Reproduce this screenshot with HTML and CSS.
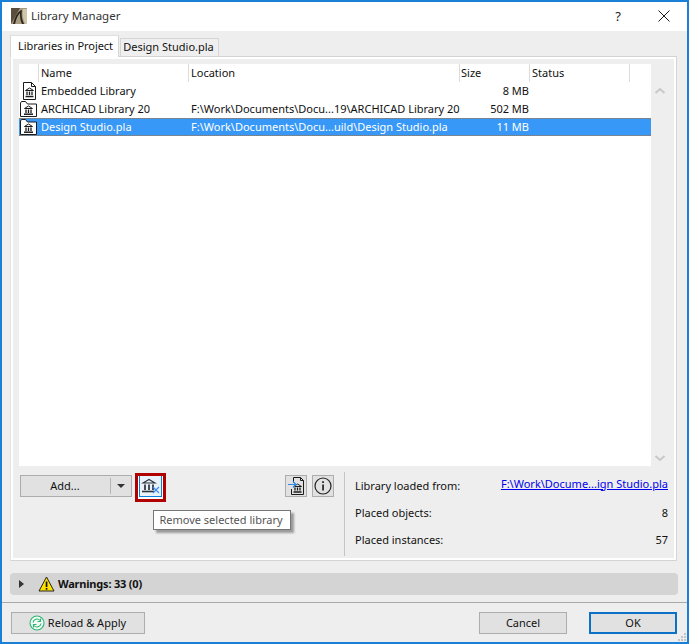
FILE: index.html
```html
<!DOCTYPE html>
<html lang="en">
<head>
<meta charset="utf-8">
<title>Library Manager</title>
<link rel="stylesheet" href="styles.css">
</head>
<body>
<svg class="defs" width="0" height="0">
  <symbol id="temple" viewBox="0 0 16 16">
    <path d="M8 1.500 2 5h12z" fill="none" stroke="currentColor" stroke-width="1.200"/>
    <path d="M4 6.500v5.500M8 6.500v5.500M12 6.500v5.500" stroke="currentColor" stroke-width="1.700" fill="none"/>
    <path d="M1 13.500h12" stroke="currentColor" stroke-width="1.600" fill="none"/>
  </symbol>
  <symbol id="doc" viewBox="0 0 15 18">
    <path d="M1.500.5h8l4 4v13h-12z" fill="#fff" stroke="#1a1a1a"/>
    <path d="M9.500.5v4h4" fill="none" stroke="#1a1a1a"/>
    <path d="M7.500 6 3.500 8.500h8z" fill="none" stroke="#1a1a1a"/>
    <path d="M5 9.500v3.500M7.500 9.500v3.500M10 9.500v3.500" fill="none" stroke="#1a1a1a" stroke-width="1.300"/>
    <path d="M3.500 14.500h8" fill="none" stroke="#1a1a1a" stroke-width="1.500"/>
  </symbol>
  <symbol id="folder" viewBox="0 0 17 16">
    <path d="M.5 15.500V2l1-1.500h4l2 2.500h9v12.500z" fill="#fff" stroke="#1a1a1a"/>
    <path d="M8.500 5 4.500 7.500h8z" fill="none" stroke="#1a1a1a"/>
    <path d="M6 8.500v3.500M8.500 8.500v3.500M11 8.500v3.500" fill="none" stroke="#1a1a1a" stroke-width="1.300"/>
    <path d="M4 13.200h9" fill="none" stroke="#1a1a1a" stroke-width="1.500"/>
  </symbol>
</svg>
<div class="window">
  <header class="titlebar">
    <svg class="app-icon" width="16" height="16" viewBox="0 0 16 16"><rect width="16" height="16" fill="#5a4d3c"/><path d="M0 16 9 0h7v16z" fill="#a59a82"/><path d="M2 16C4 8 7 3 11 2c-1 5 0 10 2 14h-2C9 12 9 8 9 5 6 8 5 12 4 16z" fill="#2c2519"/><path d="M12 1h4v15h-2c-2-5-3-10-2-15z" fill="#cfc5a9"/></svg>
    <span class="title">Library Manager</span>
    <span class="help">?</span>
    <svg class="close" width="12" height="12" viewBox="0 0 12 12"><path d="M.5.500l11 11M11.500.500l-11 11" stroke="#1a1a1a" fill="none"/></svg>
  </header>

  <nav class="tabs">
    <div class="tab tab-active">Libraries in Project</div>
    <div class="tab">Design Studio.pla</div>
  </nav>

  <section class="panel">
    <div class="list-area">
      <div class="list">
        <div class="row head">
          <div class="c-icon"></div>
          <div class="c-name">Name</div>
          <div class="c-loc">Location</div>
          <div class="c-size">Size</div>
          <div class="c-status">Status</div>
          <div class="c-end"></div>
        </div>
        <div class="row">
          <div class="c-icon"><svg class="ic-doc"><use href="#doc"/></svg></div>
          <div class="c-name">Embedded Library</div>
          <div class="c-loc"></div>
          <div class="c-size num">8 MB</div>
        </div>
        <div class="row">
          <div class="c-icon"><svg class="ic-folder"><use href="#folder"/></svg></div>
          <div class="c-name">ARCHICAD Library 20</div>
          <div class="c-loc">F:\Work\Documents\Docu...19\ARCHICAD Library 20</div>
          <div class="c-size num">502 MB</div>
        </div>
        <div class="row selected">
          <div class="c-icon"><svg class="ic-folder"><use href="#folder"/></svg></div>
          <div class="c-name">Design Studio.pla</div>
          <div class="c-loc">F:\Work\Documents\Docu...uild\Design Studio.pla</div>
          <div class="c-size num">11 MB</div>
        </div>
      </div>
      <div class="scroll">
        <svg width="12" height="8" viewBox="0 0 12 8"><path d="M1.500 6 6 2l4.500 4" fill="none" stroke="#c8c8c8" stroke-width="2"/></svg>
        <svg width="12" height="8" viewBox="0 0 12 8"><path d="M1.500 2 6 6l4.500-4" fill="none" stroke="#c8c8c8" stroke-width="2"/></svg>
      </div>
    </div>

    <div class="lower">
      <div class="controls">
        <div class="btn add">
          <span class="add-label">Add...</span>
          <span class="add-arrow"><i class="arrow-down"></i></span>
        </div>
        <div class="remove">
          <div class="remove-inner">
            <svg class="ic-temple"><use href="#temple"/></svg>
            <svg class="ic-x" width="8" height="8" viewBox="0 0 8 8"><path d="M1 1l6 6M7 1 1 7" stroke="#3b8cff" stroke-width="1.200" fill="none"/></svg>
          </div>
        </div>
        <div class="icon-group">
          <div class="btn icon-btn">
            <svg class="ic-doc2" viewBox="0 0 15 18"><path d="M3.500 6V.5h7l3 3v14h-12V12" fill="none" stroke="#1a1a1a"/><path d="M10.500.5v3h3" fill="none" stroke="#1a1a1a"/><path d="M7.500 7 3.500 9.500h8z" fill="none" stroke="#1a1a1a"/><path d="M5 10.500v3M7.500 10.500v3M10 10.500v3" fill="none" stroke="#1a1a1a" stroke-width="1.300"/><path d="M3.500 15h8" fill="none" stroke="#1a1a1a" stroke-width="1.500"/></svg>
            <svg class="ic-arrow" width="9" height="7" viewBox="0 0 9 7"><path d="M0 3.500h8M5 .5l3 3-3 3" fill="none" stroke="#2f86e8" stroke-width="1.200"/></svg>
          </div>
          <div class="btn icon-btn">
            <svg width="18" height="18" viewBox="0 0 18 18"><circle cx="9" cy="9" r="8" fill="none" stroke="#222" stroke-width="1.200"/><rect x="8.200" y="7.500" width="1.700" height="6" fill="#222"/><rect x="8.200" y="4.200" width="1.700" height="1.800" fill="#222"/></svg>
          </div>
        </div>
        <div class="tooltip">Remove selected library</div>
      </div>
      <div class="info">
        <div class="info-row link-row"><span>Library loaded from:</span><a class="link" href="#">F:\Work\Docume...ign Studio.pla</a></div>
        <div class="info-row"><span>Placed objects:</span><span>8</span></div>
        <div class="info-row"><span>Placed instances:</span><span>57</span></div>
      </div>
    </div>
  </section>

  <div class="warnings">
    <i class="arrow-right"></i>
    <svg class="warn-icon" width="17" height="16" viewBox="0 0 17 16"><path d="M8.500 1 16 15H1z" fill="#ffe100" stroke="#222" stroke-linejoin="round"/><rect x="7.700" y="5.500" width="1.700" height="5.500" fill="#111"/><rect x="7.700" y="12" width="1.700" height="1.700" fill="#111"/></svg>
    <span class="warn-text">Warnings: 33 (0)</span>
  </div>

  <footer class="footer">
    <div class="btn reload">
      <svg width="16" height="16" viewBox="0 0 16 16"><circle cx="8" cy="8" r="7" fill="#f4fbf6" stroke="#2bb673" stroke-width="1.100"/><path d="M4 7.500A4 4 0 0 1 11 5.500M12 8.500A4 4 0 0 1 5 10.500" fill="none" stroke="#2bb673" stroke-width="1.100"/><path d="M11.500 3.500v3h-3M4.500 12.500v-3h3" fill="none" stroke="#2bb673" stroke-width="1.100"/></svg>
      <span>Reload &amp; Apply</span>
    </div>
    <div class="btn cancel">Cancel</div>
    <div class="btn ok">OK</div>
    <svg class="grip" width="8" height="8" viewBox="0 0 8 8"><path d="M6 0h2v2H6zM3 3h2v2H3zM6 3h2v2H6zM0 6h2v2H0zM3 6h2v2H3zM6 6h2v2H6z" fill="#c4c4c4"/></svg>
  </footer>
</div>
</body>
</html>
```
FILE: styles.css
```css
* { box-sizing: border-box; }
html, body { margin: 0; padding: 0; }
body {
  width: 689px;
  height: 644px;
  overflow: hidden;
  font-family: "Noto Sans", "Open Sans", sans-serif;
  font-size: 11px;
  line-height: 16px;
  color: #111;
}
.defs { position: absolute; }
.window {
  width: 689px;
  height: 644px;
  border: 2px solid #1a7fd6;
  background: #eeeeee;
  display: flex;
  flex-direction: column;
  position: relative;
}

/* title bar */
.titlebar {
  height: 29px;
  background: #fff;
  display: flex;
  align-items: center;
  padding-left: 9px;
}
.app-icon { margin-top: -1px; }
.title { margin-left: 4px; font-size: 11.500px; color: #333; margin-top: -1px; }
.help { margin-left: auto; font-size: 13px; color: #222; margin-top: -2px; }
.close { margin-left: 37px; margin-right: 17px; margin-top: -2px; }

/* tabs */
.tabs {
  margin: 4px 0 0 8px;
  height: 21px;
  display: flex;
  align-items: flex-end;
  position: relative;
  z-index: 1;
}
.tab {
  height: 18px;
  width: 99px;
  border: 1px solid #d6d6d6;
  border-bottom: 0;
  margin-left: 1px;
  padding-right: 2px;
  text-align: center;
  white-space: nowrap;
  background: #efefef;
}
.tab-active {
  height: 22px;
  width: 109px;
  margin-left: 0;
  margin-bottom: -1px;
  padding: 2px 0 0 2px;
  background: #fff;
  border-color: #e0e0e0 #d6d6d6 transparent #d6d6d6;
  letter-spacing: -.05px;
}

/* main panel */
.panel {
  margin-left: 8px;
  width: 667px;
  height: 505px;
  border: 1px solid #d4d4d4;
  border-left-color: #e4e4e4;
  box-shadow: inset 0 0 0 2px #fff;
  padding: 7px 8px 0;
  display: flex;
  flex-direction: column;
}
.list-area { display: flex; height: 402px; }
.list { width: 632px; background: #fff; display: flex; flex-direction: column; }
.row { display: flex; height: 18px; flex: none; align-items: stretch; line-height: 18px; white-space: nowrap; }
.c-icon { width: 20px; display: flex; align-items: center; padding-left: 2px; flex: none; }
.c-name { width: 150px; padding-left: 2px; flex: none; }
.c-loc { width: 271px; padding-left: 2px; flex: none; overflow: hidden; }
.c-size { width: 70px; padding-left: 1px; flex: none; }
.c-status { width: 100px; padding-left: 2px; flex: none; }
.c-end { width: 20px; flex: none; }
.num { text-align: right; padding: 0 1px 0 0; }
.head { width: 631px; background: #fff; }
.head > div { border-left: 1px solid #dcdcdc; }
.head > .c-icon { border-left: 0; width: 19px; }
.selected {
  background: #3898f8;
  color: #fff;
  border-top: 1px dotted #b5722e;
  border-bottom: 1px dotted #b5722e;
  line-height: 16px;
}
.ic-doc { width: 15px; height: 18px; margin-left: 1px; }
.ic-folder { width: 17px; height: 16px; margin-left: -1px; }
.scroll {
  width: 16px;
  margin-left: 1px;
  padding: 23px 0 4px;
  display: flex;
  flex-direction: column;
  justify-content: space-between;
  align-items: center;
}

/* lower */
.lower { display: flex; flex: 1; }
.controls {
  width: 325px;
  display: flex;
  align-items: flex-start;
  position: relative;
  padding: 9px 0 0 1px;
}
.btn {
  background: #e1e1e1;
  border: 1px solid #adadad;
  display: flex;
  align-items: center;
  justify-content: center;
  height: 22px;
}
.add { width: 112px; justify-content: flex-start; }
.add-label { width: 90px; text-align: center; margin-left: -1px; }
.add-arrow {
  flex: 1;
  height: 16px;
  border-left: 1px solid #b5b5b5;
  display: flex;
  align-items: center;
  justify-content: center;
}
.arrow-down {
  width: 0; height: 0;
  border: 4px solid transparent;
  border-top: 4px solid #333;
  border-bottom: 0;
}
.remove {
  width: 31px;
  height: 29px;
  margin: -2px 0 0 3px;
  border: 3px solid #b10000;
  background: #fff;
  padding: 0 1px 2px;
}
.remove-inner {
  height: 100%;
  border: 1px solid #0b7fdc;
  border-top: 0;
  background: #e9f2fb;
  position: relative;
  color: #2c3238;
  display: flex;
  align-items: center;
  justify-content: center;
}
.ic-temple { width: 16px; height: 16px; margin-left: -4px; }
.ic-x { position: absolute; right: 1px; bottom: 2px; }
.icon-group { margin-left: auto; display: flex; gap: 5px; margin-right: 10px; }
.icon-btn { width: 22px; position: relative; }
.ic-doc2 { width: 15px; height: 18px; margin-left: 2px; }
.ic-arrow { position: absolute; left: 2px; top: 5px; }
.tooltip {
  position: absolute;
  left: 134px;
  top: 44px;
  width: 138px;
  height: 20px;
  border: 1px solid #767676;
  background: #fff;
  color: #555;
  padding-right: 2px;
  text-align: center;
  line-height: 18px;
  box-shadow: 3px 3px 2px rgba(0, 0, 0, .35);
}
.info {
  margin-top: 6px;
  width: 324px;
  height: 84px;
  border-left: 1px solid #c4c4c4;
  padding: 0 0 0 10px;
  display: flex;
  flex-direction: column;
}
.info-row { display: flex; justify-content: space-between; height: 27px; align-items: center; flex: none; }
.link { color: #0000ee; text-decoration: underline; margin-top: -4px; }

/* warnings */
.warnings {
  margin: 12px 0 0 8px;
  width: 668px;
  height: 22px;
  background: #d4d4d4;
  border-radius: 4px;
  display: flex;
  align-items: center;
}
.arrow-right {
  margin-left: 9px;
  width: 0; height: 0;
  border: 4.500px solid transparent;
  border-left: 5px solid #333;
  border-right: 0;
}
.warn-icon { margin-left: 14px; }
.warn-text { margin-left: 3px; font-weight: 700; letter-spacing: -.2px; }

/* footer */
.footer {
  margin-top: 7px;
  flex: 1;
  border-top: 1px solid #a8a8a8;
  padding: 9px 0 0 9px;
  display: flex;
  align-items: flex-start;
  position: relative;
}
.reload { width: 134px; gap: 3px; padding-right: 1px; }
.cancel { width: 88px; margin-left: auto; }
.ok { width: 88px; margin-left: 22px; margin-right: 10px; border: 2px solid #0b72c8; }
.grip { position: absolute; right: 1px; bottom: 1px; }
```
